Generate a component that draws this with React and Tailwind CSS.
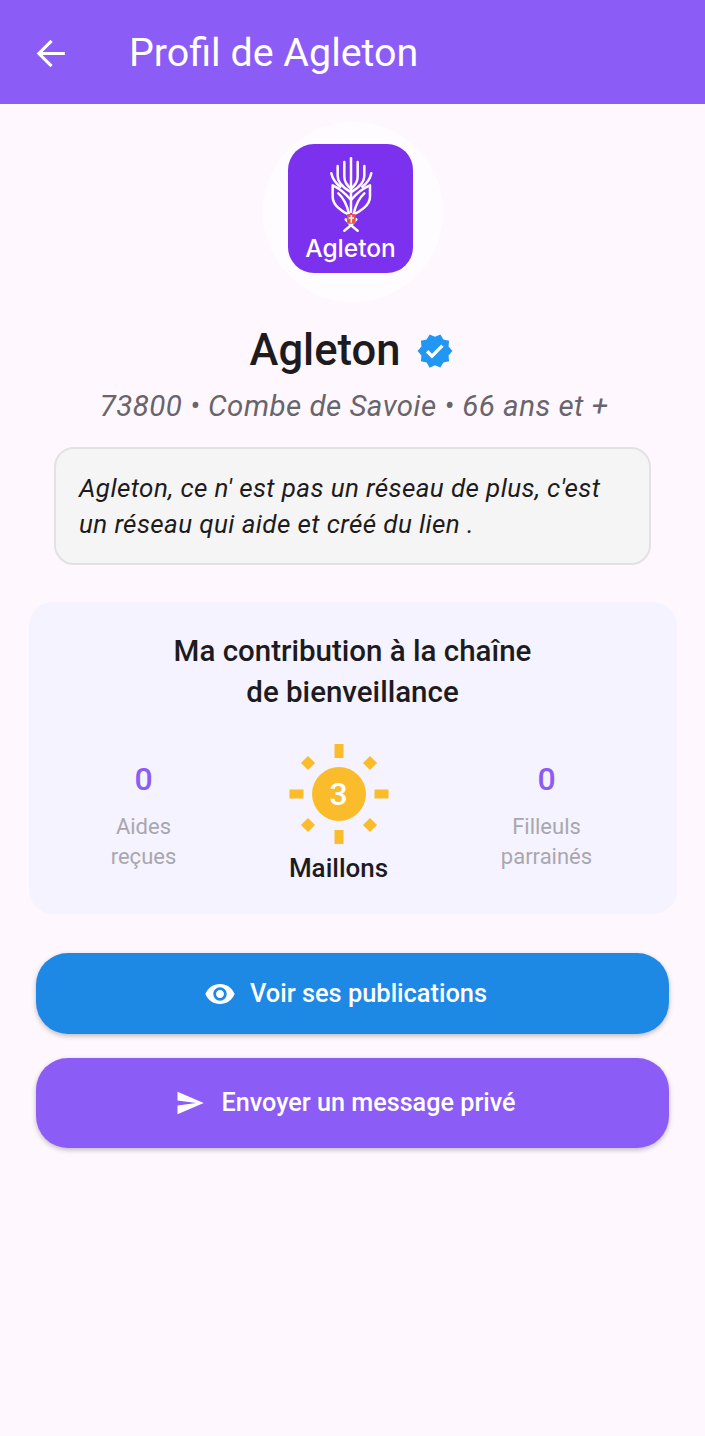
function TreeLogo() {
  return (
    <svg viewBox="0 0 180 270" className="w-[60px] h-[90px] shrink-0" fill="none" stroke="white" strokeWidth="7.5" strokeLinecap="round" strokeLinejoin="round">
      <path d="M90 25V185" />
      <path d="M70 36V80C70 96 78 106 90 116" />
      <path d="M110 36V80C110 96 102 106 90 116" />
      <path d="M50 48V78C50 98 66 112 86 124" />
      <path d="M130 48V78C130 98 114 112 94 124" />
      <path d="M31 70C35 88 44 100 58 110" />
      <path d="M151 70C147 88 138 100 124 110" />
      <path d="M35 106V140C35 165 62 186 90 197C118 186 147 165 147 140V106C125 115 105 132 90 150C75 132 55 115 35 106Z" />
      <path d="M52 130C68 144 78 164 84 192" />
      <path d="M130 130C114 144 104 164 98 192" />
      <path d="M70 242L90 226L110 242" />
      <path d="M74 208L90 226L106 208" />
      <rect x="78" y="192" width="26" height="29" rx="3" fill="#e2574c" stroke="none" />
      <path d="M91 195V218M83 204H99" strokeWidth="4.5" strokeLinecap="butt" />
    </svg>
  );
}

function Badge() {
  return (
    <svg viewBox="0 0 24 24" className="w-[38px] h-[38px]">
      <path fill="#2196f3" d="M23 12l-2.44-2.79.34-3.69-3.61-.82-1.89-3.2L12 2.96 8.6 1.5 6.71 4.69 3.1 5.5l.34 3.7L1 12l2.44 2.79-.34 3.7 3.61.82L8.6 22.5l3.4-1.47 3.4 1.46 1.89-3.19 3.61-.82-.34-3.69L23 12z" />
      <path fill="white" d="M10.09 16.72l-3.8-3.81 1.48-1.48 2.32 2.33 5.85-5.87 1.48 1.48z" />
    </svg>
  );
}

function Sun() {
  return (
    <svg viewBox="0 0 100 100" className="w-[100px] h-[100px]" fill="#fbbc2c">
      <rect x="45.5" y="0" width="9" height="14" />
      <rect x="45.5" y="86" width="9" height="14" />
      <rect x="0.5" y="45.5" width="14" height="9" />
      <rect x="85.5" y="45.5" width="14" height="9" />
      <rect x="14" y="14" width="10" height="10" transform="rotate(45 19 19)" />
      <rect x="76" y="14" width="10" height="10" transform="rotate(45 81 19)" />
      <rect x="14" y="76" width="10" height="10" transform="rotate(45 19 81)" />
      <rect x="76" y="76" width="10" height="10" transform="rotate(45 81 81)" />
      <circle cx="50" cy="50" r="27" />
    </svg>
  );
}

function Stat({ value, label, className }) {
  return (
    <div className={`w-[130px] flex flex-col items-center pt-[14px] ${className}`}>
      <div className="text-[32px] leading-[42px] font-medium text-[#8b5cf6]">{value}</div>
      <div className="mt-[12px] text-[22px] leading-[30px] text-center text-[#a9a7ae]">{label}</div>
    </div>
  );
}

export default function App() {
  return (
    <div className="w-[705px] h-[1436px] bg-[#fff7fe] font-['Roboto',sans-serif] flex flex-col">
      <header className="h-[104px] bg-[#8b5cf6] flex items-center text-white shrink-0">
        <svg viewBox="0 0 24 24" className="ml-[29px] mt-[3px] w-[43px] h-[43px]" fill="none" stroke="white" strokeWidth="1.75">
          <path d="M20 12H6M12.6 4.9L5.5 12l7.1 7.1" />
        </svg>
        <h1 className="ml-[57px] pt-[1px] text-[39.4px] font-normal leading-none">Profil de Agleton</h1>
      </header>

      <div className="flex flex-col items-center">
        <div className="mt-[18px] w-[180px] h-[180px] rounded-full bg-[#fffcff] flex items-center justify-center pr-[4px] pb-[7px]">
          <div className="w-[125px] h-[129px] rounded-[26px] bg-[#7c31ee] flex flex-col items-center pt-[6px] text-white">
            <TreeLogo />
            <span className="-mt-[7px] font-['Inter',sans-serif] text-[24.5px] leading-[30px] font-medium">Agleton</span>
          </div>
        </div>

        <div className="mt-[19px] h-[60px] flex items-center gap-[16px] -ml-[1px]">
          <h2 className="text-[43.5px] leading-none font-medium text-[#1d1b20]">Agleton</h2>
          <Badge />
        </div>

        <p className="mt-[6px] ml-[3px] text-[29.5px] leading-[38px] tracking-[0.48px] italic text-[#67646c]">73800 • Combe de Savoie • 66 ans et +</p>

        <div className="mt-[22px] w-[597px] h-[118px] rounded-[20px] border-2 border-[#e3e1e4] bg-[#f5f5f5] px-[23px] pt-[21px] text-[26px] leading-[36px] tracking-[0.4px] italic text-[#1d1b20]">
          Agleton, ce n' est pas un réseau de plus, c'est<br />un réseau qui aide et créé du lien .
        </div>

        <section className="mt-[37px] w-[648px] h-[312px] rounded-[24px] bg-[#f5f3ff] pt-[29px] flex flex-col items-center">
          <h3 className="text-center text-[29.5px] leading-[41px] font-medium text-[#1d1b20]">
            Ma contribution à la chaîne<br />de bienveillance
          </h3>
          <div className="mt-[31px] w-full flex pl-[50px]">
            <Stat value="0" label={<>Aides<br />reçues</>} />
            <div className="ml-[80px] w-[100px] flex flex-col items-center">
              <div className="relative w-[100px] h-[100px]">
                <Sun />
                <span className="absolute inset-0 flex items-center justify-center text-[32px] font-medium text-white">3</span>
              </div>
              <span className="mt-[6px] text-[26px] leading-[36px] font-medium text-[#1d1b20]">Maillons</span>
            </div>
            <Stat value="0" label={<>Filleuls<br />parrainés</>} className="ml-[93px]" />
          </div>
        </section>

        <button className="mt-[39px] w-[633px] h-[81px] rounded-[32px] bg-[#1e88e5] text-white flex items-center justify-center gap-[14px] pr-[14px] text-[25.4px] font-medium shadow-[0_2px_5px_rgba(0,0,0,0.25)]">
          <svg viewBox="0 0 24 24" className="w-[32px] h-[32px]" fill="white">
            <path d="M12 4.5C7 4.5 2.73 7.61 1 12c1.73 4.39 6 7.5 11 7.5s9.27-3.11 11-7.5c-1.73-4.39-6-7.5-11-7.5zM12 17c-2.76 0-5-2.24-5-5s2.24-5 5-5 5 2.24 5 5-2.24 5-5 5zm0-8c-1.66 0-3 1.34-3 3s1.34 3 3 3 3-1.34 3-3-1.34-3-3-3z" />
          </svg>
          Voir ses publications
        </button>

        <button className="mt-[24px] w-[633px] h-[90px] rounded-[32px] bg-[#8b5cf6] text-white flex items-center justify-center gap-[16px] pr-[14px] text-[25.2px] font-medium shadow-[0_2px_5px_rgba(0,0,0,0.25)]">
          <svg viewBox="0 0 24 24" className="w-[30px] h-[30px]" fill="white">
            <path d="M2.01 21L23 12 2.01 3 2 10l15 2-15 2z" />
          </svg>
          Envoyer un message privé
        </button>
      </div>
    </div>
  );
}
